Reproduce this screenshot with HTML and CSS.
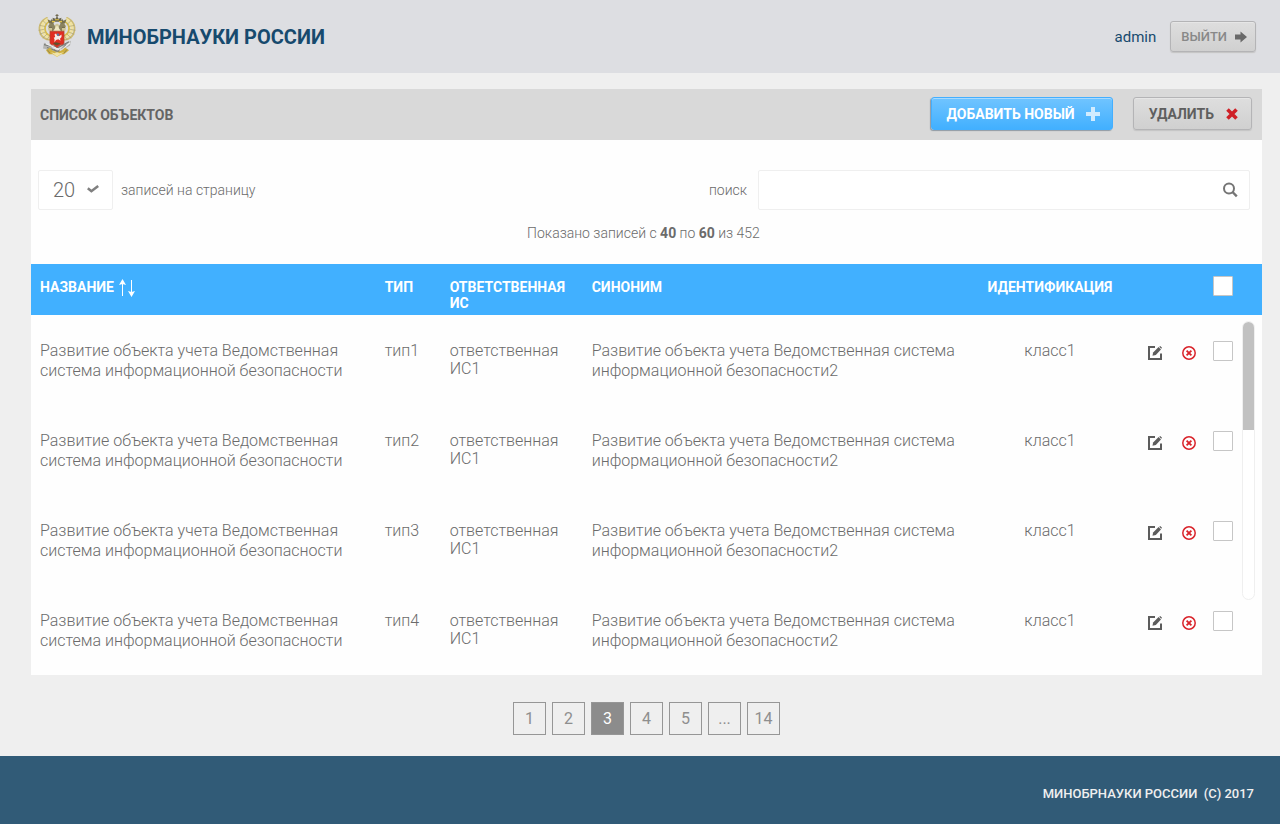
FILE: index.html
```html
<!DOCTYPE html>
<html lang="ru">
<head>
<meta charset="utf-8">
<meta name="viewport" content="width=device-width, initial-scale=1">
<title>Минобрнауки России — Список объектов</title>
<link rel="stylesheet" href="styles.css">
</head>
<body>
<svg class="sprite" aria-hidden="true">
  <symbol id="icon-edit" viewBox="0 0 14 14">
    <path d="M7 1H1v12h12V7.500" fill="none" stroke="#5c5c5c" stroke-width="2"/>
    <path d="M4.500 9.800l.6-3.300L10.600 1l2.400 2.400-5.200 5.500z" fill="#5c5c5c"/>
    <path d="M11.300.7l.9-.7L14 1.800l-.8.9z" fill="#5c5c5c"/>
  </symbol>
  <symbol id="icon-remove" viewBox="0 0 14 14">
    <circle cx="7" cy="7" r="6.200" fill="none" stroke="#d9232a" stroke-width="1.500"/>
    <path d="M4.600 4.600l4.800 4.800M9.400 4.600L4.600 9.400" stroke="#d9232a" stroke-width="1.800"/>
  </symbol>
</svg>

<header class="header">
  <a class="brand" href="#">
    <svg class="brand__emblem" viewBox="0 0 38 46" preserveAspectRatio="none" aria-hidden="true">
      <g fill="none" stroke-linecap="round">
        <path d="M13 27C5 27 1 21 1.500 14 2 9 5 6 9 4" stroke="#cdbb72" stroke-width="1.800"/>
        <path d="M25 27c8 0 12-6 11.500-13C36 9 33 6 29 4" stroke="#cdbb72" stroke-width="1.800"/>
        <path d="M13 25C8 24 4 20 4 15c0-4 2-7 5-9M25 25c5-1 9-5 9-10 0-4-2-7-5-9" stroke="#f1e3a0" stroke-width="2.800"/>
        <path d="M13 23c-4-1-6-4-6-8 0-3 1-5 4-7M25 23c4-1 6-4 6-8 0-3-1-5-4-7" stroke="#d9be4a" stroke-width="1.800"/>
        <path d="M1 17l5-1M2 21l5-2M5 25l4-4M2 12l5 1M5 7l4 4M37 17l-5-1M36 21l-5-2M33 25l-4-4M36 12l-5 1M33 7l-4 4M9 27l3-5M29 27l-3-5" stroke="#a39a6c" stroke-width=".6"/>
      </g>
      <path d="M11 18c-2-3-1-7 2-9l3 3 3-2 3 2 3-3c3 2 4 6 2 9z" fill="#cfc698"/>
      <path d="M14 18v-4l-4-1 2-3 3-1 2 4v5zM24 18v-4l4-1-2-3-3-1-2 4v5z" fill="#8a8360"/>
      <path d="M15 18l4-6 4 6z" fill="#efe8c4"/>
      <path d="M11 10L9.500 5.500l3 1.500L14 5l1 2 1.500-.5L15.500 10zM27 10l1.500-4.500-3 1.500L24 5l-1 2-1.500-.5 1 3.500z" fill="#77714f"/>
      <path d="M15.500 8L14.500 4l3 1L19 2.500 20.500 5l3-1-1 4z" fill="#69654e"/>
      <path d="M19 0v4M17.500 1.500h3M11 14h3M24 14h3" stroke="#6a6348" stroke-width="1"/>
      <path d="M14 8h3M21 8h3M17 6h4" stroke="#e0c247" stroke-width="1.200"/>
      <path d="M6 30l6 2 3 4 4 2 4-2 3-4 7-4-1 5-5 3-4 5-4 2-5-2-4-4-5-1z" fill="#b4b4b1"/>
      <path d="M6 32l14 3 11-6M9 35l13 5 6-8" fill="none" stroke="#7b7c79" stroke-width="1.300"/>
      <path d="M8 31l15 7 9-8" fill="none" stroke="#eeeeee" stroke-width="1.300"/>
      <path d="M8 38l4-3 2 3 5 2 5-2 3-3 4 3-5 4h-3l-4 3-4-3h-4z" fill="#cfb03f"/>
      <path d="M13 40l4 1 2-2 2 2 5-1-5 3-2 2-2-2z" fill="#f0e4a8"/>
      <path d="M9 37l3 4M29 37l-3 4M16 37l3 3 3-3" fill="none" stroke="#817b5c" stroke-width=".8"/>
      <path d="M12 18h14v12c0 2-2 2-4 2.500L19 35l-3-2.500c-2-.5-4-.5-4-2.500z" fill="#e02d22" stroke="#b0452e" stroke-width=".8"/>
      <path d="M16.500 21.500l1.500-1 1 2 2.500.5 2-1.500v2.500l-1.500 1.800.6 2.200-2.300-1.500-2.300.8-1.500 2.200v-3.200l-.8-1.600 1.500-.7z" fill="#f5ece7"/>
      <path d="M19 20l2.500 1-.8 2.200-1.700-.8z" fill="#5579a3"/>
      <path d="M15 30.500l3-1 4 1 .8.800-2.800.9-1 .8-2-.8z" fill="#61512b"/>
    </svg>
    <span class="brand__name">МИНОБРНАУКИ РОССИИ</span>
  </a>
  <div class="account">
    <a class="account__name" href="#">admin</a>
    <button class="button button--exit" type="button">
      ВЫЙТИ
      <svg width="12" height="12" viewBox="0 0 12 12" aria-hidden="true"><path d="M0 3.500h5.500V.5L12 6l-6.500 5.500v-3H0z" fill="#696969"/></svg>
    </button>
  </div>
</header>

<main class="main">
  <section class="panel">
    <div class="panel__bar">
      <h1 class="panel__title">СПИСОК ОБЪЕКТОВ</h1>
      <div class="panel__actions">
        <button class="button button--add" type="button">
          ДОБАВИТЬ НОВЫЙ
          <svg width="14" height="14" viewBox="0 0 14 14" aria-hidden="true"><path d="M7 0v14M0 7h14" stroke="#d2ecff" stroke-width="4"/></svg>
        </button>
        <button class="button button--delete" type="button">
          УДАЛИТЬ
          <svg width="12" height="12" viewBox="0 0 12 12" aria-hidden="true"><path d="M1.500 1.500l9 9M10.500 1.500l-9 9" stroke="#cf2027" stroke-width="3.600"/></svg>
        </button>
      </div>
    </div>

    <div class="filters">
      <div class="page-size">
        <div class="page-size__box">
          <select class="page-size__select" id="page-size"><option>20</option><option>50</option></select>
          <svg class="page-size__icon" width="12" height="8" viewBox="0 0 12 8" aria-hidden="true"><path d="M.8 3.200l3.600 3L11.200 1" fill="none" stroke="#808080" stroke-width="2.600"/></svg>
        </div>
        <label for="page-size">записей на страницу</label>
      </div>
      <form class="search">
        <label for="search">поиск</label>
        <div class="search__box">
          <input class="search__input" id="search" type="text">
          <button class="icon-button" type="button" aria-label="Найти">
            <svg width="16" height="16" viewBox="0 0 16 16" aria-hidden="true"><circle cx="7" cy="6.500" r="5" fill="none" stroke="#757575" stroke-width="2"/><path d="M10.500 10l4.300 4.300" stroke="#757575" stroke-width="2.400"/></svg>
          </button>
        </div>
      </form>
    </div>
    <p class="summary">Показано записей с <b>40</b> по <b>60</b> из 452</p>

    <div class="list">
      <table class="table">
        <colgroup>
          <col class="col-name"><col class="col-type"><col class="col-owner"><col class="col-synonym"><col class="col-id"><col class="col-actions"><col class="col-check">
        </colgroup>
        <thead>
          <tr>
            <th>НАЗВАНИЕ
              <button class="icon-button sort" type="button" aria-label="Сортировать"><svg width="16" height="18" viewBox="0 0 16 18" aria-hidden="true"><path d="M3.500 3v14M12.500 1v14" stroke="#fff"/><path d="M0 6l3.500-6L7 6l-3.500-1zM9 12l3.500 6 3.500-6-3.500 1z" fill="#fff"/></svg></button>
            </th>
            <th>ТИП</th>
            <th>ОТВЕТСТВЕННАЯ ИС</th>
            <th>СИНОНИМ</th>
            <th class="cell-id">ИДЕНТИФИКАЦИЯ</th>
            <th></th>
            <th class="cell-check"><input class="check" type="checkbox" aria-label="Выбрать все"></th>
          </tr>
        </thead>
        <tbody>
          <tr>
            <td>Развитие объекта учета Ведомственная система информационной безопасности</td>
            <td>тип1</td>
            <td class="cell-owner">ответственная ИС1</td>
            <td>Развитие объекта учета Ведомственная система информационной безопасности2</td>
            <td class="cell-id">класс1</td>
            <td class="cell-actions"><div class="actions"><button class="icon-button" type="button" aria-label="Изменить"><svg width="14" height="14"><use href="#icon-edit"/></svg></button><button class="icon-button" type="button" aria-label="Удалить"><svg width="14" height="14"><use href="#icon-remove"/></svg></button></div></td>
            <td class="cell-check"><input class="check" type="checkbox" aria-label="Выбрать тип1"></td>
          </tr>
          <tr>
            <td>Развитие объекта учета Ведомственная система информационной безопасности</td>
            <td>тип2</td>
            <td class="cell-owner">ответственная ИС1</td>
            <td>Развитие объекта учета Ведомственная система информационной безопасности2</td>
            <td class="cell-id">класс1</td>
            <td class="cell-actions"><div class="actions"><button class="icon-button" type="button" aria-label="Изменить"><svg width="14" height="14"><use href="#icon-edit"/></svg></button><button class="icon-button" type="button" aria-label="Удалить"><svg width="14" height="14"><use href="#icon-remove"/></svg></button></div></td>
            <td class="cell-check"><input class="check" type="checkbox" aria-label="Выбрать тип2"></td>
          </tr>
          <tr>
            <td>Развитие объекта учета Ведомственная система информационной безопасности</td>
            <td>тип3</td>
            <td class="cell-owner">ответственная ИС1</td>
            <td>Развитие объекта учета Ведомственная система информационной безопасности2</td>
            <td class="cell-id">класс1</td>
            <td class="cell-actions"><div class="actions"><button class="icon-button" type="button" aria-label="Изменить"><svg width="14" height="14"><use href="#icon-edit"/></svg></button><button class="icon-button" type="button" aria-label="Удалить"><svg width="14" height="14"><use href="#icon-remove"/></svg></button></div></td>
            <td class="cell-check"><input class="check" type="checkbox" aria-label="Выбрать тип3"></td>
          </tr>
          <tr>
            <td>Развитие объекта учета Ведомственная система информационной безопасности</td>
            <td>тип4</td>
            <td class="cell-owner">ответственная ИС1</td>
            <td>Развитие объекта учета Ведомственная система информационной безопасности2</td>
            <td class="cell-id">класс1</td>
            <td class="cell-actions"><div class="actions"><button class="icon-button" type="button" aria-label="Изменить"><svg width="14" height="14"><use href="#icon-edit"/></svg></button><button class="icon-button" type="button" aria-label="Удалить"><svg width="14" height="14"><use href="#icon-remove"/></svg></button></div></td>
            <td class="cell-check"><input class="check" type="checkbox" aria-label="Выбрать тип4"></td>
          </tr>
        </tbody>
      </table>
      <div class="scrollbar"><div class="scrollbar__thumb"></div></div>
    </div>
  </section>

  <nav class="pages" aria-label="Страницы">
    <a class="pages__item" href="#">1</a>
    <a class="pages__item" href="#">2</a>
    <a class="pages__item pages__item--current" href="#" aria-current="page">3</a>
    <a class="pages__item" href="#">4</a>
    <a class="pages__item" href="#">5</a>
    <a class="pages__item" href="#">...</a>
    <a class="pages__item" href="#">14</a>
  </nav>
</main>

<footer class="footer">МИНОБРНАУКИ РОССИИ&nbsp; (С) 2017</footer>
</body>
</html>
```
FILE: styles.css
```css
*,
*::before,
*::after {
  box-sizing: border-box;
}

body {
  display: flex;
  flex-direction: column;
  min-height: 100vh;
  margin: 0;
  background: #efefef;
  color: #6b6b6b;
  font-family: Roboto, "Liberation Sans", sans-serif;
  font-size: 14px;
}

button,
input,
select {
  font: inherit;
  color: inherit;
}

a {
  color: inherit;
  text-decoration: none;
}

svg {
  display: block;
  flex: none;
}

.sprite {
  position: absolute;
  width: 0;
  height: 0;
}

.header {
  display: flex;
  align-items: center;
  justify-content: space-between;
  min-height: 73px;
  padding: 0 24px 2px 38px;
  background: #dddee2;
  color: #174a6e;
}

.brand {
  display: flex;
  align-items: center;
  gap: 11px;
}

.brand__emblem {
  width: 38px;
  height: 44px;
}

.brand__name {
  padding-top: 2px;
  font-size: 20px;
  font-weight: 700;
}

.account {
  display: flex;
  align-items: center;
  gap: 14px;
  padding-top: 2px;
}

.account__name {
  font-size: 15px;
}

.button {
  display: flex;
  align-items: center;
  justify-content: space-between;
  height: 33px;
  border: 1px solid #b4b4b6;
  border-radius: 3px;
  background: linear-gradient(#dedede, #d0d0d0);
  box-shadow: 0 1px 1px #c4c4c4, inset 0 1px 0 #e6e6e6;
  font-weight: 700;
  white-space: nowrap;
}

.button--exit {
  gap: 8px;
  height: 31px;
  padding: 0 8px 0 10px;
  color: #888;
  font-size: 13px;
  font-weight: 500;
}

.button--add {
  gap: 11px;
  padding: 0 12px 0 15px;
  border-color: #43afff;
  background: linear-gradient(#70c4ff, #42b0ff);
  box-shadow: -1px 1px 1px #8f9aa3, inset 0 1px 0 #a9dbff;
  color: #fff;
}

.button--delete {
  gap: 12px;
  padding: 0 13px 0 15px;
  color: #5f5f5f;
}

.icon-button {
  padding: 0;
  border: 0;
  background: none;
}

.main {
  flex: 1;
  padding: 16px 18px 21px 31px;
}

.panel {
  background: #fefefe;
}

.panel__bar {
  display: flex;
  align-items: center;
  justify-content: space-between;
  min-height: 51px;
  padding: 0 10px 0 9px;
  background: #d9d9d9;
}

.panel__title {
  margin: 0;
  color: #656565;
  font-size: 14px;
  font-weight: 700;
}

.panel__actions {
  display: flex;
  gap: 20px;
  padding-bottom: 2px;
}

.filters {
  display: flex;
  justify-content: space-between;
  padding: 30px 12px 0 7px;
  font-weight: 300;
}

.page-size,
.search {
  display: flex;
  align-items: center;
}

.page-size {
  gap: 8px;
}

.page-size__box {
  position: relative;
}

.page-size__select {
  width: 75px;
  height: 40px;
  padding: 0 14px;
  border: 1px solid #efefef;
  border-radius: 2px;
  background: #fff;
  appearance: none;
  font-size: 20px;
  font-weight: 300;
}

.page-size__icon {
  position: absolute;
  top: 15px;
  right: 14px;
  pointer-events: none;
}

.search {
  gap: 11px;
}

.search__box {
  display: flex;
  align-items: center;
  width: 492px;
  height: 40px;
  padding-right: 11px;
  border: 1px solid #efefef;
  border-radius: 2px;
  background: #fff;
}

.search__input {
  flex: 1;
  min-width: 0;
  height: 100%;
  padding: 0 12px;
  border: 0;
  background: none;
}

.summary {
  margin: 0;
  padding: 15px 6px 23px 0;
  font-weight: 300;
  line-height: 16px;
  text-align: center;
}

.summary b {
  font-weight: 700;
}

.list {
  position: relative;
}

.table {
  width: 100%;
  border-collapse: collapse;
  table-layout: fixed;
}

.col-name {
  width: 28%;
}

.col-type {
  width: 65px;
}

.col-owner {
  width: 142px;
}

.col-id {
  width: 184px;
}

.col-actions {
  width: 62px;
}

.col-check {
  width: 58px;
}

.table th {
  height: 51px;
  padding: 15px 0 0 9px;
  background: #41b0ff;
  color: #fff;
  font-weight: 700;
  line-height: 16px;
  text-align: left;
  vertical-align: top;
}

.table td {
  height: 90px;
  padding: 26px 0 0 9px;
  font-size: 16px;
  font-weight: 300;
  line-height: 20px;
  vertical-align: top;
}

.table .cell-owner {
  padding-top: 27px;
  line-height: 18px;
}

.table .cell-id {
  padding-left: 0;
  text-align: center;
}

.table .cell-actions {
  padding-top: 31px;
  padding-left: 6px;
}

.table th.cell-check {
  padding-top: 12px;
}

.sort {
  display: inline-block;
  margin-left: 2px;
  vertical-align: middle;
}

.actions {
  display: flex;
  gap: 20px;
}

.check {
  display: block;
  width: 20px;
  height: 20px;
  margin: 0;
  border: 1px solid #c6c6c6;
  border-radius: 1px;
  background: #fff;
  appearance: none;
}

.scrollbar {
  position: absolute;
  top: 57px;
  right: 7px;
  width: 13px;
  height: 279px;
  border: 1px solid #efefef;
  border-radius: 7px;
  background: #fff;
}

.scrollbar__thumb {
  height: 108px;
  border-radius: 6px 6px 0 0;
  background: #c1c1c1;
}

.pages {
  display: flex;
  justify-content: center;
  gap: 6px;
  padding-top: 27px;
}

.pages__item {
  display: flex;
  align-items: center;
  justify-content: center;
  width: 33px;
  height: 33px;
  border: 1px solid #969696;
  color: #8e8e8e;
  font-size: 16px;
}

.pages__item--current {
  background: #8c8c8c;
  color: #fff;
}

.footer {
  display: flex;
  align-items: center;
  justify-content: flex-end;
  min-height: 68px;
  padding: 6px 26px 0;
  background: #315b77;
  color: #efefef;
  font-size: 13px;
  font-weight: 500;
}
```
